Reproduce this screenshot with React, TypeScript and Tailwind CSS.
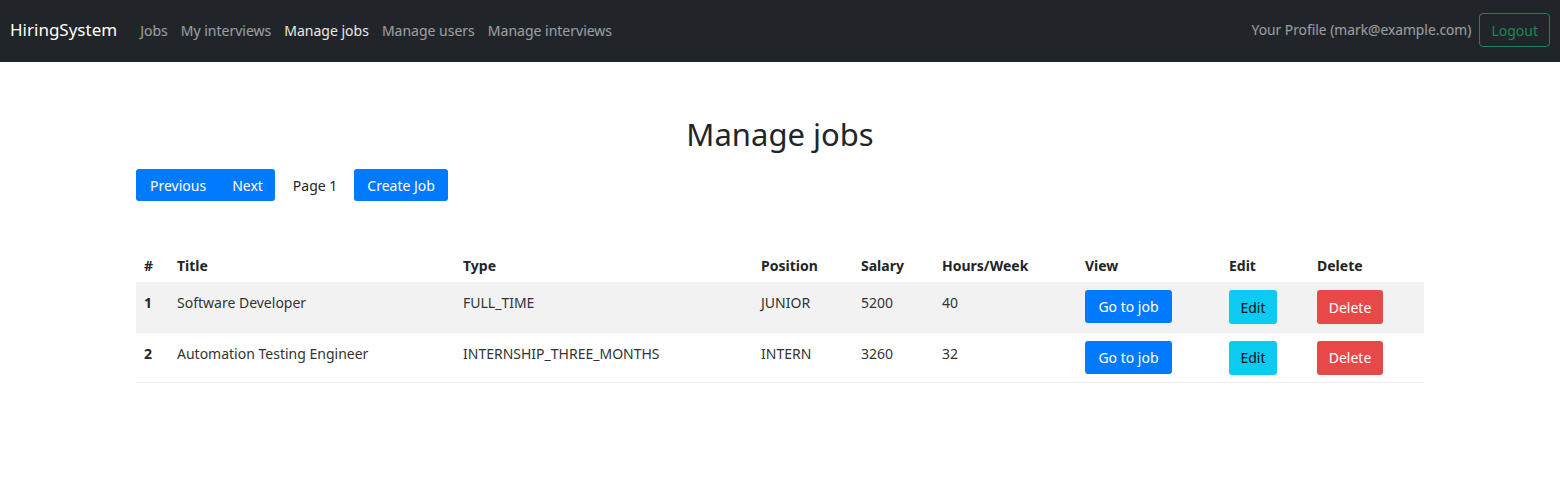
import React from "react";

const font = { fontFamily: '"Noto Sans", "Open Sans", sans-serif' };

const rows = [
  { id: 1, title: "Software Developer", type: "FULL_TIME", position: "JUNIOR", salary: "5200", hours: "40", shade: true },
  { id: 2, title: "Automation Testing Engineer", type: "INTERNSHIP_THREE_MONTHS", position: "INTERN", salary: "3260", hours: "32", shade: false },
];

export default function App() {
  return (
    <div className="min-h-[489px] bg-white text-[#212529] text-[14px]" style={font}>
      <nav className="h-[62px] bg-[#212529] flex items-center pl-[10px] pr-[10px] pb-[2px]">
        <span className="text-white text-[17px] mr-[23px]">HiringSystem</span>
        <div className="flex items-center gap-[13px] text-[14px]">
          <span className="text-white/55">Jobs</span>
          <span className="text-white/55">My interviews</span>
          <span className="text-white/90">Manage jobs</span>
          <span className="text-white/55">Manage users</span>
          <span className="text-white/55">Manage interviews</span>
        </div>
        <div className="ml-auto flex items-center gap-[8px]">
          <span className="text-white/55 text-[13.8px]">Your Profile (mark@example.com)</span>
          <button className="h-[34px] px-[11px] border border-[#198754] rounded-[4px] text-[#198754] text-[14px]">Logout</button>
        </div>
      </nav>
      <div className="w-[1288px] ml-[136px]">
        <h1 className="text-[31px] text-center mt-[49px] leading-[46px] text-[#212529]">Manage jobs</h1>
        <div className="flex items-center mt-[12px] h-[32px]">
          <div className="flex">
            <button className="h-[32px] pl-[14px] pr-[13px] bg-[#007bff] text-white rounded-l-[3px]">Previous</button>
            <button className="h-[32px] pl-[13px] pr-[12px] bg-[#007bff] text-white rounded-r-[3px]">Next</button>
          </div>
          <span className="ml-[18px] mr-[17px] text-[#212529]">Page 1</span>
          <button className="h-[32px] px-[13px] bg-[#007bff] text-white rounded-[3px]">Create Job</button>
        </div>
        <table className="w-full mt-[49px] border-collapse">
          <thead>
            <tr className="h-[32px] font-bold text-left">
              <th className="w-[32px] pl-[8px] pb-[2px] font-bold">#</th>
              <th className="w-[286px] pl-[9px] pb-[2px] font-bold">Title</th>
              <th className="w-[298px] pl-[9px] pb-[2px] font-bold">Type</th>
              <th className="w-[100px] pl-[9px] pb-[2px] font-bold">Position</th>
              <th className="w-[81px] pl-[9px] pb-[2px] font-bold">Salary</th>
              <th className="w-[143px] pl-[9px] pb-[2px] font-bold">Hours/Week</th>
              <th className="w-[144px] pl-[9px] pb-[2px] font-bold">View</th>
              <th className="w-[88px] pl-[9px] pb-[2px] font-bold">Edit</th>
              <th className="pl-[9px] pb-[2px] font-bold">Delete</th>
            </tr>
          </thead>
          <tbody>
            {rows.map((r) => (
              <tr key={r.id} className={`h-[50px] border-b border-[#eeeeee] ${r.shade ? "bg-[#f2f2f2]" : "bg-white"}`}>
                <td className="align-top pt-[10px] pl-[8px] font-bold">{r.id}</td>
                <td className="align-top pt-[10px] pl-[9px] text-[#333]">{r.title}</td>
                <td className="align-top pt-[10px] pl-[9px] text-[#333]">{r.type}</td>
                <td className="align-top pt-[10px] pl-[9px] text-[#333]">{r.position}</td>
                <td className="align-top pt-[10px] pl-[9px] text-[#333]">{r.salary}</td>
                <td className="align-top pt-[10px] pl-[9px] text-[#333]">{r.hours}</td>
                <td className="align-top pt-[8px] pl-[9px]">
                  <button className="h-[33px] w-[87px] bg-[#007bff] text-white rounded-[3px]">Go to job</button>
                </td>
                <td className="align-top pt-[8px] pl-[9px]">
                  <button className="h-[34px] w-[48px] bg-[#0dcaf0] text-[#111] rounded-[3px]">Edit</button>
                </td>
                <td className="align-top pt-[8px] pl-[9px]">
                  <button className="h-[34px] w-[66px] bg-[#e84848] text-white rounded-[3px]">Delete</button>
                </td>
              </tr>
            ))}
          </tbody>
        </table>
      </div>
    </div>
  );
}
